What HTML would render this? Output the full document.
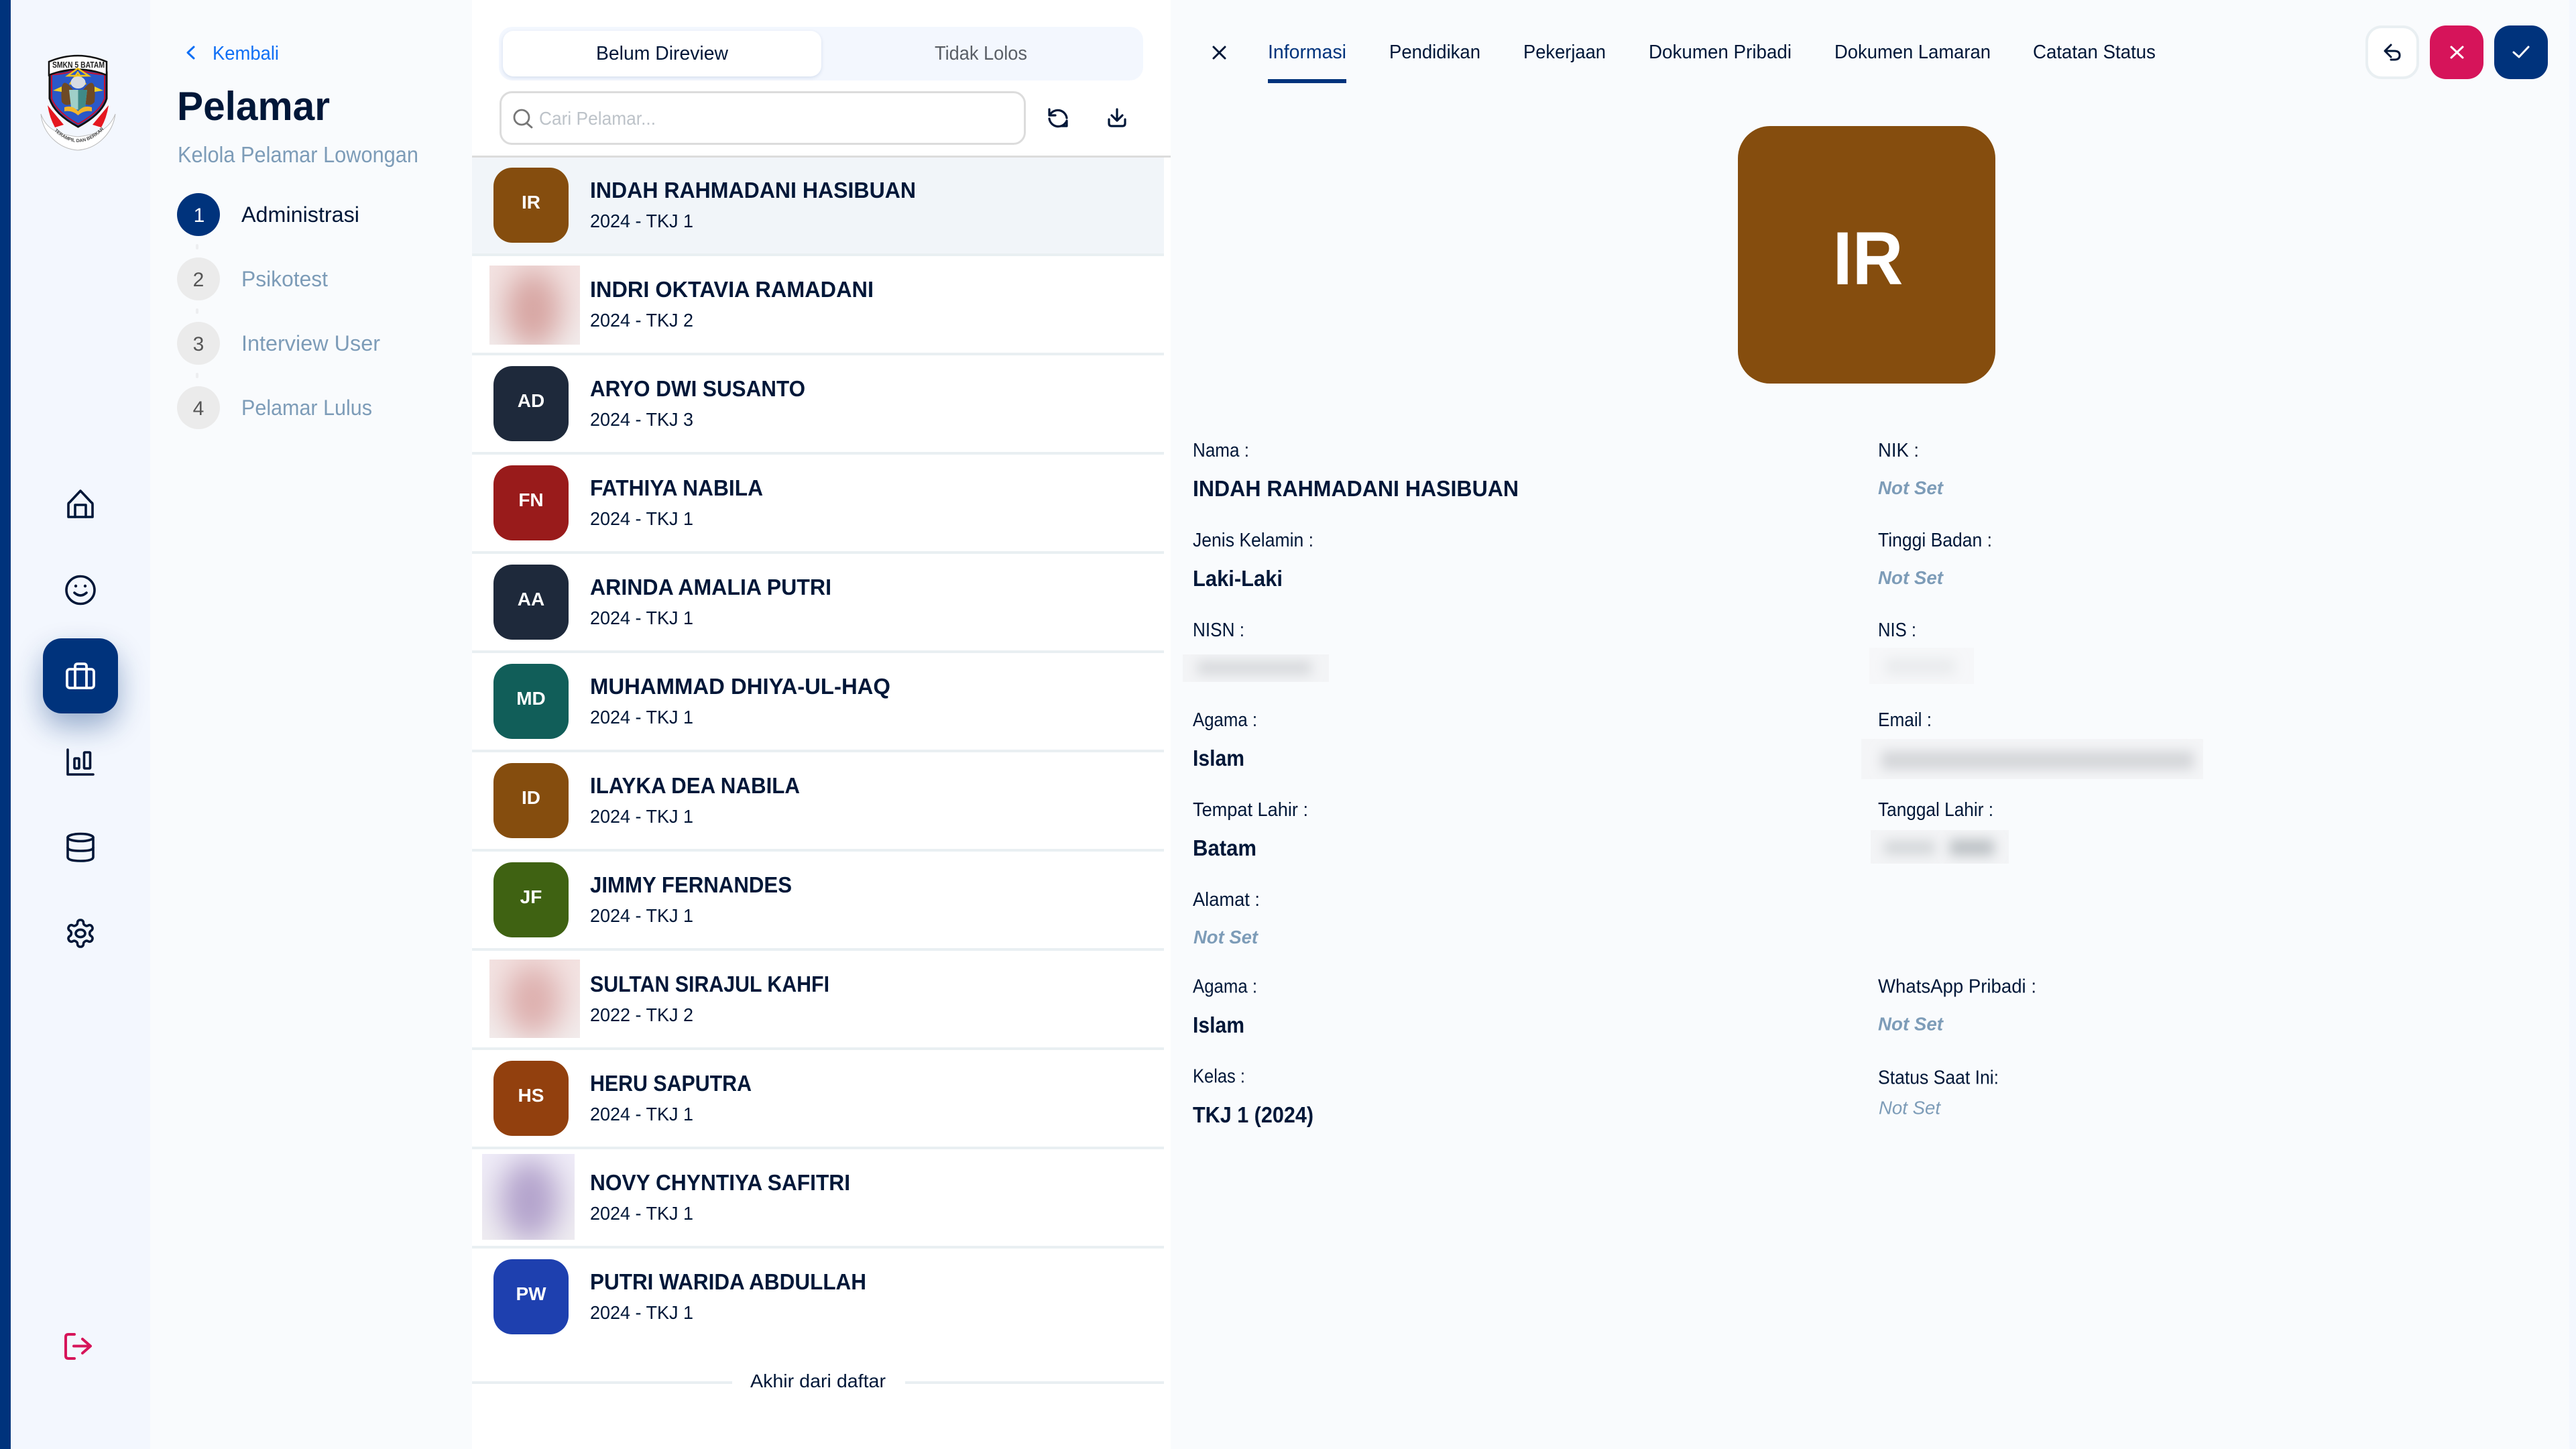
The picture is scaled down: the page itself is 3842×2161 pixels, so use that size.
<!DOCTYPE html>
<html lang="id">
<head>
<meta charset="utf-8">
<title>Pelamar</title>
<style>
html,body{margin:0;padding:0;background:#fff;width:3842px;height:2161px;overflow:hidden}
svg{display:block;font-family:"Liberation Sans",sans-serif}
.n{font-size:33px;font-weight:700;fill:#001738}
.s{font-size:28px;fill:#001738}
.a{font-size:28px;font-weight:700;fill:#fff;text-anchor:middle}
.l{font-size:28.500px;fill:#001738}
.v{font-size:33px;font-weight:700;fill:#001738}
.ns{font-size:27.500px;font-weight:700;font-style:italic;fill:#7D9CB8}
.t{font-size:28.500px;fill:#001738}
.step{font-size:32.500px;fill:#7D9CB8}
.i{fill:none;stroke:#001738;stroke-width:3.6;stroke-linecap:round;stroke-linejoin:round}
</style>
</head>
<body>
<svg width="3842" height="2161" viewBox="0 0 3842 2161" xmlns="http://www.w3.org/2000/svg">
<defs>
<filter id="b6" x="-30%" y="-100%" width="160%" height="300%"><feGaussianBlur stdDeviation="9"/></filter>
<filter id="b18" x="-80%" y="-80%" width="260%" height="260%"><feGaussianBlur stdDeviation="22"/></filter>
<filter id="sh" x="-60%" y="-60%" width="220%" height="240%"><feGaussianBlur stdDeviation="22"/></filter>
<filter id="sh2" x="-10%" y="-20%" width="120%" height="150%"><feGaussianBlur stdDeviation="3"/></filter>
<linearGradient id="g1" x1="0" y1="0" x2="0" y2="1"><stop offset="0" stop-color="#F3E2E1"/><stop offset="1" stop-color="#F2ECEC"/></linearGradient>
<linearGradient id="g3" x1="0" y1="0" x2="0" y2="1"><stop offset="0" stop-color="#EFECF8"/><stop offset="1" stop-color="#EFEDF1"/></linearGradient>
<clipPath id="c1"><rect x="730" y="396" width="135" height="118"/></clipPath>
<clipPath id="c2"><rect x="730" y="1431" width="135" height="117"/></clipPath>
<clipPath id="c3"><rect x="719" y="1721" width="138" height="128"/></clipPath>
<clipPath id="c4"><rect x="1764" y="976" width="218" height="41"/></clipPath>
<clipPath id="c5"><rect x="2788" y="966" width="156" height="54"/></clipPath>
<clipPath id="c6"><rect x="2776" y="1102" width="510" height="60"/></clipPath>
<clipPath id="c7"><rect x="2790" y="1238" width="206" height="50"/></clipPath>
<path id="rb" d="M78 192 Q116 232 156 192"/>
</defs>

<!-- backgrounds -->
<rect width="3842" height="2161" fill="#F9FBFD"/>
<rect x="16" width="208" height="2161" fill="#F3F7FE"/>
<rect width="16" height="2161" fill="#00337C"/>
<rect x="704" width="1042" height="2161" fill="#fff"/>
<rect x="3832" width="10" height="2161" fill="#F3F7FE"/>

<!-- logo -->
<g>
<path d="M61 170 C64 200 88 222 116 224 C144 222 168 200 172 170 C164 190 150 200 116 204 C82 200 68 190 61 170Z" fill="#fff" stroke="#bbb" stroke-width="1"/>
<path d="M71 157 L95 186 L82 190 Q74 176 71 157Z" fill="#E5171F"/>
<path d="M162 157 L138 186 L151 190 Q159 176 162 157Z" fill="#E5171F"/>
<path d="M74 108 Q96 108 116.500 100 Q138 108 159 108 L159 147 Q152 170 116.500 189 Q81 170 74 147Z" fill="#2A58C8" stroke="#111" stroke-width="3"/>
<path d="M77 111 Q97 111 116.500 103 Q136 111 156 111 L156 147 Q149 167 116.500 185 Q84 167 77 147Z" fill="none" stroke="#C8102E" stroke-width="2"/>
<path d="M73 92 Q116 74 159 92 L159 112 Q116 95 73 112Z" fill="#fff" stroke="#111" stroke-width="2.500"/>
<text x="117" y="101" font-size="13" font-weight="700" fill="#222" text-anchor="middle" textLength="78" lengthAdjust="spacingAndGlyphs">SMKN 5 BATAM</text>
<path d="M101 113 L132 113 L116 102Z M104 126 L116 108 L128 126" fill="none" stroke="#F5C518" stroke-width="2.500"/>
<path d="M111 137 Q88 104 92 152 Q98 160 108 154Z M122 137 Q145 104 141 152 Q135 160 125 154Z" fill="#6E4A26"/>
<path d="M79 135 L92 129 L92 137Z M154 135 L141 129 L141 137Z" fill="#F2D024"/>
<ellipse cx="116.500" cy="123" rx="11" ry="9" fill="#D8DCE2"/>
<path d="M103 134 H130 L127 160 Q116 167 106 160Z" fill="#9FCFC8"/>
<path d="M116.500 134 H130 L127 160 Q120 165 116.500 166Z" fill="#3F8A88"/>
<path d="M96 160 Q108 156 116.500 166 Q125 156 137 160 L137 166 Q125 164 116.500 172 Q108 164 96 166Z" fill="#F3B52B"/>
<text font-size="7" fill="#444" font-weight="700"><textPath href="#rb" startOffset="4">TERAMPIL DAN BERKARAKTER</textPath></text>
</g>

<!-- sidebar icons -->
<path class="i" d="M102 771 V752 Q102 750 104 749 L120 732 L136 749 Q138 750 138 752 V771 Z" stroke-width="3.800"/>
<path class="i" d="M112 771 V753 H128 V771" stroke-width="3.800"/>
<ellipse class="i" cx="120" cy="880" rx="21" ry="20.500"/>
<circle cx="113" cy="874" r="2.200" fill="#001738"/><circle cx="127" cy="874" r="2.200" fill="#001738"/>
<path class="i" d="M111 884 Q120 892 129 884"/>
<rect x="64" y="952" width="112" height="112" rx="30" fill="#00337C" opacity=".38" filter="url(#sh)" transform="translate(0 20)"/>
<rect x="64" y="952" width="112" height="112" rx="28" fill="#00337C"/>
<g fill="none" stroke="#fff" stroke-width="3.800" stroke-linejoin="round" stroke-linecap="round">
<rect x="100" y="998" width="40" height="28" rx="4"/>
<path d="M112 1026 V994 Q112 990 116 990 H125 Q129 990 129 994 V1026"/>
</g>
<path class="i" d="M101 1118 V1155 H139"/>
<rect class="i" x="111" y="1131" width="7" height="15" rx="1"/>
<rect class="i" x="125.500" y="1122" width="9" height="24" rx="1"/>
<ellipse class="i" cx="120" cy="1249" rx="19" ry="5.500"/>
<path class="i" d="M101 1249 V1278 Q101 1284 120 1284 Q139 1284 139 1278 V1249"/>
<path class="i" d="M101 1264 Q101 1269 120 1269 Q139 1269 139 1264"/>
<g transform="translate(96 1368) scale(2)">
<path fill="none" stroke="#001738" stroke-width="1.800" stroke-linejoin="round" d="M12.220 2h-.44a2 2 0 0 0-2 2v.18a2 2 0 0 1-1 1.730l-.43.25a2 2 0 0 1-2 0l-.15-.08a2 2 0 0 0-2.730.73l-.22.38a2 2 0 0 0 .73 2.730l.15.1a2 2 0 0 1 1 1.720v.51a2 2 0 0 1-1 1.740l-.15.09a2 2 0 0 0-.73 2.730l.22.38a2 2 0 0 0 2.730.73l.15-.08a2 2 0 0 1 2 0l.43.25a2 2 0 0 1 1 1.730V20a2 2 0 0 0 2 2h.44a2 2 0 0 0 2-2v-.18a2 2 0 0 1 1-1.730l.43-.25a2 2 0 0 1 2 0l.15.08a2 2 0 0 0 2.730-.73l.22-.39a2 2 0 0 0-.73-2.730l-.15-.08a2 2 0 0 1-1-1.740v-.5a2 2 0 0 1 1-1.740l.15-.09a2 2 0 0 0 .73-2.730l-.22-.38a2 2 0 0 0-2.730-.73l-.15.08a2 2 0 0 1-2 0l-.43-.25a2 2 0 0 1-1-1.730V4a2 2 0 0 0-2-2z"/>
<ellipse cx="12" cy="12" rx="3.500" ry="2.800" fill="none" stroke="#001738" stroke-width="1.800"/>
</g>
<g fill="none" stroke="#D6145A" stroke-width="4" stroke-linecap="round" stroke-linejoin="round">
<path d="M111 1990 H102 Q98 1990 98 1994 V2022 Q98 2026 102 2026 H111"/>
<path d="M110 2007.500 H134 M123 1997 L135 2007.500 L123 2018"/>
</g>

<!-- stepper column -->
<path d="M289 70 L280 78.500 L289 87" fill="none" stroke="#0F6FF5" stroke-width="3" stroke-linecap="round" stroke-linejoin="round"/>
<text x="317" y="89" font-size="28.500" fill="#0F6FF5" textLength="99" lengthAdjust="spacingAndGlyphs">Kembali</text>
<text x="264" y="179" font-size="60" font-weight="700" fill="#001738" textLength="228" lengthAdjust="spacingAndGlyphs">Pelamar</text>
<text x="265" y="242" font-size="33" fill="#7D9CB8" textLength="359" lengthAdjust="spacingAndGlyphs">Kelola Pelamar Lowongan</text>
<circle cx="296" cy="320" r="32" fill="#00337C"/>
<circle cx="296" cy="416" r="32" fill="#EBEBEB"/>
<circle cx="296" cy="512" r="32" fill="#EBEBEB"/>
<circle cx="296" cy="608" r="32" fill="#EBEBEB"/>
<rect x="292" y="364" width="4" height="8" rx="2" fill="#EDEEF0"/>
<rect x="292" y="460" width="4" height="8" rx="2" fill="#EDEEF0"/>
<rect x="292" y="556" width="4" height="8" rx="2" fill="#EDEEF0"/>
<g font-size="30" text-anchor="middle">
<text x="297" y="331" fill="#fff">1</text>
<text x="296" y="427" fill="#555">2</text>
<text x="296" y="523" fill="#555">3</text>
<text x="296" y="619" fill="#555">4</text>
</g>
<text x="360" y="331" class="step" style="fill:#001738" textLength="176" lengthAdjust="spacingAndGlyphs">Administrasi</text>
<text x="360" y="427" class="step" textLength="129" lengthAdjust="spacingAndGlyphs">Psikotest</text>
<text x="360" y="523" class="step" textLength="207" lengthAdjust="spacingAndGlyphs">Interview User</text>
<text x="360" y="619" class="step" textLength="195" lengthAdjust="spacingAndGlyphs">Pelamar Lulus</text>

<!-- list header -->
<rect x="744" y="40" width="961" height="80" rx="20" fill="#F3F7FE"/>
<rect x="750" y="48" width="475" height="68" rx="16" fill="#00337C" opacity=".12" filter="url(#sh2)"/>
<rect x="750" y="46" width="475" height="68" rx="16" fill="#fff"/>
<text x="889" y="89" class="t" textLength="197" lengthAdjust="spacingAndGlyphs">Belum Direview</text>
<text x="1394" y="89" class="t" style="fill:#5A5F66" textLength="138" lengthAdjust="spacingAndGlyphs">Tidak Lolos</text>
<rect x="746.500" y="137.500" width="782" height="77" rx="17" fill="#fff" stroke="#DCDCDC" stroke-width="3"/>
<circle cx="778" cy="175" r="11" fill="none" stroke="#777" stroke-width="2.800"/>
<path d="M786 184 L793 190" stroke="#777" stroke-width="2.800" stroke-linecap="round"/>
<text x="804" y="186" font-size="28" fill="#BDC3C9" textLength="174" lengthAdjust="spacingAndGlyphs">Cari Pelamar...</text>
<g fill="none" stroke="#001738" stroke-width="3.200" stroke-linecap="round" stroke-linejoin="round">
<path d="M1566 171 A13.500 13.500 0 0 1 1591 176"/>
<path d="M1565 163 V172 H1574"/>
<path d="M1565 177 A13.500 13.500 0 0 0 1590 182"/>
<path d="M1591 180 V188 H1583"/>
<path d="M1666 163 V179 M1658 172 L1666 180 L1674 172"/>
<path d="M1654 178 V184 Q1654 188 1658 188 H1674 Q1678 188 1678 184 V178"/>
</g>
<rect x="704" y="232" width="1042" height="3" fill="#DCDCDC"/>

<!-- list rows -->
<rect x="704" y="235" width="1032" height="143" fill="#F1F5F9"/>
<g fill="#E9EFF2">
<rect x="704" y="378" width="1032" height="4"/><rect x="704" y="526" width="1032" height="4"/><rect x="704" y="674" width="1032" height="4"/>
<rect x="704" y="822" width="1032" height="4"/><rect x="704" y="970" width="1032" height="4"/><rect x="704" y="1118" width="1032" height="4"/>
<rect x="704" y="1266" width="1032" height="4"/><rect x="704" y="1414" width="1032" height="4"/><rect x="704" y="1562" width="1032" height="4"/>
<rect x="704" y="1710" width="1032" height="4"/><rect x="704" y="1858" width="1032" height="4"/>
<rect x="704" y="2060" width="388" height="4"/><rect x="1350" y="2060" width="386" height="4"/>
</g>

<rect x="736" y="250" width="112" height="112" rx="28" fill="#854D0E"/><text x="792" y="311" class="a">IR</text>
<text x="880" y="295" class="n" textLength="486" lengthAdjust="spacingAndGlyphs">INDAH RAHMADANI HASIBUAN</text>
<text x="880" y="339" class="s" textLength="154" lengthAdjust="spacingAndGlyphs">2024 - TKJ 1</text>

<g clip-path="url(#c1)"><rect x="730" y="396" width="135" height="118" fill="url(#g1)"/><ellipse cx="795" cy="462" rx="42" ry="60" fill="#D7A5A2" filter="url(#b18)"/></g>
<text x="880" y="443" class="n" textLength="423" lengthAdjust="spacingAndGlyphs">INDRI OKTAVIA RAMADANI</text>
<text x="880" y="487" class="s" textLength="154" lengthAdjust="spacingAndGlyphs">2024 - TKJ 2</text>

<rect x="736" y="546" width="112" height="112" rx="28" fill="#1E293B"/><text x="792" y="607" class="a">AD</text>
<text x="880" y="591" class="n" textLength="321" lengthAdjust="spacingAndGlyphs">ARYO DWI SUSANTO</text>
<text x="880" y="635" class="s" textLength="154" lengthAdjust="spacingAndGlyphs">2024 - TKJ 3</text>

<rect x="736" y="694" width="112" height="112" rx="28" fill="#991B1B"/><text x="792" y="755" class="a">FN</text>
<text x="880" y="739" class="n" textLength="258" lengthAdjust="spacingAndGlyphs">FATHIYA NABILA</text>
<text x="880" y="783" class="s" textLength="154" lengthAdjust="spacingAndGlyphs">2024 - TKJ 1</text>

<rect x="736" y="842" width="112" height="112" rx="28" fill="#1E293B"/><text x="792" y="903" class="a">AA</text>
<text x="880" y="887" class="n" textLength="360" lengthAdjust="spacingAndGlyphs">ARINDA AMALIA PUTRI</text>
<text x="880" y="931" class="s" textLength="154" lengthAdjust="spacingAndGlyphs">2024 - TKJ 1</text>

<rect x="736" y="990" width="112" height="112" rx="28" fill="#115E59"/><text x="792" y="1051" class="a">MD</text>
<text x="880" y="1035" class="n" textLength="448" lengthAdjust="spacingAndGlyphs">MUHAMMAD DHIYA-UL-HAQ</text>
<text x="880" y="1079" class="s" textLength="154" lengthAdjust="spacingAndGlyphs">2024 - TKJ 1</text>

<rect x="736" y="1138" width="112" height="112" rx="28" fill="#854D0E"/><text x="792" y="1199" class="a">ID</text>
<text x="880" y="1183" class="n" textLength="313" lengthAdjust="spacingAndGlyphs">ILAYKA DEA NABILA</text>
<text x="880" y="1227" class="s" textLength="154" lengthAdjust="spacingAndGlyphs">2024 - TKJ 1</text>

<rect x="736" y="1286" width="112" height="112" rx="28" fill="#3F6212"/><text x="792" y="1347" class="a">JF</text>
<text x="880" y="1331" class="n" textLength="301" lengthAdjust="spacingAndGlyphs">JIMMY FERNANDES</text>
<text x="880" y="1375" class="s" textLength="154" lengthAdjust="spacingAndGlyphs">2024 - TKJ 1</text>

<g clip-path="url(#c2)"><rect x="730" y="1431" width="135" height="117" fill="url(#g1)"/><ellipse cx="795" cy="1492" rx="42" ry="55" fill="#DDAFAD" filter="url(#b18)"/></g>
<text x="880" y="1479" class="n" textLength="357" lengthAdjust="spacingAndGlyphs">SULTAN SIRAJUL KAHFI</text>
<text x="880" y="1523" class="s" textLength="154" lengthAdjust="spacingAndGlyphs">2022 - TKJ 2</text>

<rect x="736" y="1582" width="112" height="112" rx="28" fill="#92400E"/><text x="792" y="1643" class="a">HS</text>
<text x="880" y="1627" class="n" textLength="241" lengthAdjust="spacingAndGlyphs">HERU SAPUTRA</text>
<text x="880" y="1671" class="s" textLength="154" lengthAdjust="spacingAndGlyphs">2024 - TKJ 1</text>

<g clip-path="url(#c3)"><rect x="719" y="1721" width="138" height="128" fill="url(#g3)"/><ellipse cx="790" cy="1790" rx="44" ry="62" fill="#B3A3CC" filter="url(#b18)"/></g>
<text x="880" y="1775" class="n" textLength="388" lengthAdjust="spacingAndGlyphs">NOVY CHYNTIYA SAFITRI</text>
<text x="880" y="1819" class="s" textLength="154" lengthAdjust="spacingAndGlyphs">2024 - TKJ 1</text>

<rect x="736" y="1878" width="112" height="112" rx="28" fill="#1E40AF"/><text x="792" y="1939" class="a">PW</text>
<text x="880" y="1923" class="n" textLength="412" lengthAdjust="spacingAndGlyphs">PUTRI WARIDA ABDULLAH</text>
<text x="880" y="1967" class="s" textLength="154" lengthAdjust="spacingAndGlyphs">2024 - TKJ 1</text>

<text x="1119" y="2069" class="s" textLength="202" lengthAdjust="spacingAndGlyphs">Akhir dari daftar</text>

<!-- right tabs -->
<path d="M1810 70 L1827 87 M1827 70 L1810 87" stroke="#001738" stroke-width="3" stroke-linecap="round"/>
<text x="1891" y="87" class="t" style="fill:#00337C" textLength="117" lengthAdjust="spacingAndGlyphs">Informasi</text>
<rect x="1891" y="118" width="117" height="6" fill="#00337C"/>
<text x="2072" y="87" class="t" textLength="136" lengthAdjust="spacingAndGlyphs">Pendidikan</text>
<text x="2272" y="87" class="t" textLength="123" lengthAdjust="spacingAndGlyphs">Pekerjaan</text>
<text x="2459" y="87" class="t" textLength="213" lengthAdjust="spacingAndGlyphs">Dokumen Pribadi</text>
<text x="2736" y="87" class="t" textLength="233" lengthAdjust="spacingAndGlyphs">Dokumen Lamaran</text>
<text x="3032" y="87" class="t" textLength="183" lengthAdjust="spacingAndGlyphs">Catatan Status</text>

<!-- action buttons -->
<rect x="3530" y="40" width="76" height="76" rx="22" fill="#fff" stroke="#E9EFF2" stroke-width="4"/>
<rect x="3624" y="38" width="80" height="80" rx="24" fill="#D6145A"/>
<rect x="3720" y="38" width="80" height="80" rx="24" fill="#00337C"/>
<path d="M3566 67 L3557 76 L3566 85 M3558 76 H3571 Q3579 76 3579 82.500 Q3579 89 3571 89 H3566" fill="none" stroke="#001738" stroke-width="3" stroke-linecap="round" stroke-linejoin="round"/>
<path d="M3656 70 L3673 86 M3673 70 L3656 86" stroke="#fff" stroke-width="3" stroke-linecap="round"/>
<path d="M3749 78 L3757 85 L3771 70" fill="none" stroke="#fff" stroke-width="3" stroke-linecap="round" stroke-linejoin="round"/>

<!-- big avatar -->
<rect x="2592" y="188" width="384" height="384" rx="48" fill="#854D0E"/>
<text x="2786" y="424" font-size="112" font-weight="700" fill="#fff" text-anchor="middle" textLength="105" lengthAdjust="spacingAndGlyphs">IR</text>

<!-- info left -->
<text x="1779" y="681" class="l" textLength="84" lengthAdjust="spacingAndGlyphs">Nama :</text>
<text x="1779" y="740" class="v" textLength="486" lengthAdjust="spacingAndGlyphs">INDAH RAHMADANI HASIBUAN</text>
<text x="1779" y="815" class="l" textLength="180" lengthAdjust="spacingAndGlyphs">Jenis Kelamin :</text>
<text x="1779" y="874" class="v" textLength="134" lengthAdjust="spacingAndGlyphs">Laki-Laki</text>
<text x="1779" y="949" class="l" textLength="77" lengthAdjust="spacingAndGlyphs">NISN :</text>
<g clip-path="url(#c4)"><rect x="1764" y="976" width="218" height="41" fill="#F3F4F6"/><rect x="1786" y="986" width="170" height="20" fill="#D6D8DB" filter="url(#b6)"/></g>
<text x="1779" y="1083" class="l" textLength="96" lengthAdjust="spacingAndGlyphs">Agama :</text>
<text x="1779" y="1142" class="v" textLength="77" lengthAdjust="spacingAndGlyphs">Islam</text>
<text x="1779" y="1217" class="l" textLength="172" lengthAdjust="spacingAndGlyphs">Tempat Lahir :</text>
<text x="1779" y="1276" class="v" textLength="95" lengthAdjust="spacingAndGlyphs">Batam</text>
<text x="1779" y="1351" class="l" textLength="100" lengthAdjust="spacingAndGlyphs">Alamat :</text>
<text x="1780" y="1407" class="ns" textLength="96" lengthAdjust="spacingAndGlyphs">Not Set</text>
<text x="1779" y="1480.500" class="l" textLength="96" lengthAdjust="spacingAndGlyphs">Agama :</text>
<text x="1779" y="1540" class="v" textLength="77" lengthAdjust="spacingAndGlyphs">Islam</text>
<text x="1779" y="1614.500" class="l" textLength="78" lengthAdjust="spacingAndGlyphs">Kelas :</text>
<text x="1779" y="1674" class="v" textLength="180" lengthAdjust="spacingAndGlyphs">TKJ 1 (2024)</text>

<!-- info right -->
<text x="2801" y="681" class="l" textLength="61" lengthAdjust="spacingAndGlyphs">NIK :</text>
<text x="2801" y="737" class="ns" textLength="97" lengthAdjust="spacingAndGlyphs">Not Set</text>
<text x="2801" y="815" class="l" textLength="170" lengthAdjust="spacingAndGlyphs">Tinggi Badan :</text>
<text x="2801" y="871" class="ns" textLength="97" lengthAdjust="spacingAndGlyphs">Not Set</text>
<text x="2801" y="949" class="l" textLength="57" lengthAdjust="spacingAndGlyphs">NIS :</text>
<g clip-path="url(#c5)"><rect x="2788" y="966" width="156" height="54" fill="#F6F7F9"/><rect x="2812" y="982" width="104" height="24" fill="#E9EBED" filter="url(#b6)"/></g>
<text x="2801" y="1083" class="l" textLength="80" lengthAdjust="spacingAndGlyphs">Email :</text>
<g clip-path="url(#c6)"><rect x="2776" y="1102" width="510" height="60" fill="#F4F5F7"/><rect x="2806" y="1120" width="466" height="28" fill="#D4D6D9" filter="url(#b6)"/></g>
<text x="2801" y="1217" class="l" textLength="172" lengthAdjust="spacingAndGlyphs">Tanggal Lahir :</text>
<g clip-path="url(#c7)"><rect x="2790" y="1238" width="206" height="50" fill="#F3F4F6"/><rect x="2810" y="1254" width="76" height="20" fill="#D2D5D8" filter="url(#b6)"/><rect x="2908" y="1252" width="66" height="24" fill="#BCC1C5" filter="url(#b6)"/></g>
<text x="2801" y="1480.500" class="l" textLength="236" lengthAdjust="spacingAndGlyphs">WhatsApp Pribadi :</text>
<text x="2801" y="1536.500" class="ns" textLength="97" lengthAdjust="spacingAndGlyphs">Not Set</text>
<text x="2801" y="1616.500" class="l" textLength="180" lengthAdjust="spacingAndGlyphs">Status Saat Ini:</text>
<text x="2802" y="1661.500" font-size="27.500" font-style="italic" fill="#7D9CB8" textLength="92" lengthAdjust="spacingAndGlyphs">Not Set</text>
</svg>
</body>
</html>
